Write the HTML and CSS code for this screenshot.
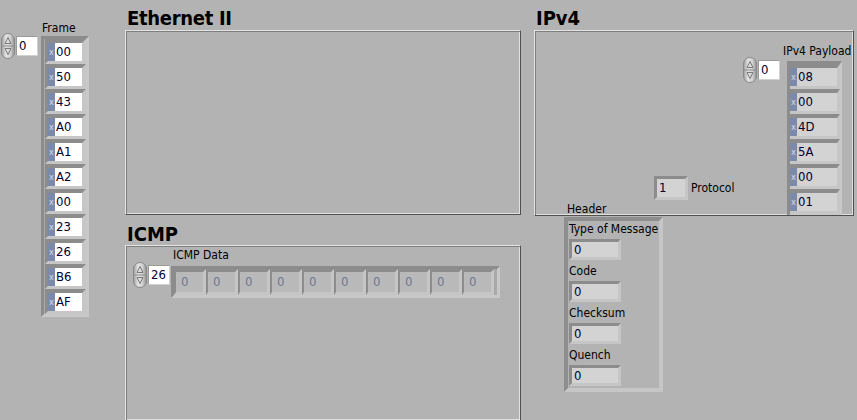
FILE: index.html
```html
<!DOCTYPE html>
<html>
<head>
<meta charset="utf-8">
<title>Front Panel</title>
<link rel="stylesheet" href="styles.css">
</head>
<body>
<svg class="defs" width="0" height="0" aria-hidden="true">
  <defs>
    <linearGradient id="spg" x1="0" y1="0" x2="1" y2="0">
      <stop offset="0" stop-color="#9c9c9c"/>
      <stop offset="0.35" stop-color="#e4e4e4"/>
      <stop offset="0.7" stop-color="#d0d0d0"/>
      <stop offset="1" stop-color="#8e8e8e"/>
    </linearGradient>
  </defs>
</svg>
<div class="panel">
  <div class="col col-frame">
    <div class="ctl ctl-frame">
      <div class="idx">
        <svg class="spin" width="14" height="26" viewBox="0 0 14 26"><rect x="0.5" y="0.5" width="13" height="25" rx="6.5" fill="url(#spg)" stroke="#888"/><line x1="1.5" y1="13" x2="12.5" y2="13" stroke="#8a8a8a"/><path d="M7 4.5 L10 10.5 L4 10.5 Z" fill="none" stroke="#7a7a7a"/><path d="M7 21.5 L10 15.5 L4 15.5 Z" fill="none" stroke="#7a7a7a"/></svg>
        <div class="idxbox">0</div>
      </div>
      <div class="arr">
        <div class="lbl lbl-frame">Frame</div>
        <div class="aframe vframe">
          <div class="el ve"><span class="rdx">x</span><span class="v">00</span></div>
          <div class="el ve"><span class="rdx">x</span><span class="v">50</span></div>
          <div class="el ve"><span class="rdx">x</span><span class="v">43</span></div>
          <div class="el ve"><span class="rdx">x</span><span class="v">A0</span></div>
          <div class="el ve"><span class="rdx">x</span><span class="v">A1</span></div>
          <div class="el ve"><span class="rdx">x</span><span class="v">A2</span></div>
          <div class="el ve"><span class="rdx">x</span><span class="v">00</span></div>
          <div class="el ve"><span class="rdx">x</span><span class="v">23</span></div>
          <div class="el ve"><span class="rdx">x</span><span class="v">26</span></div>
          <div class="el ve"><span class="rdx">x</span><span class="v">B6</span></div>
          <div class="el ve"><span class="rdx">x</span><span class="v">AF</span></div>
        </div>
      </div>
    </div>
  </div>

  <div class="col col-mid">
    <div class="heading h-top">Ethernet II</div>
    <div class="cluster eth"></div>
    <div class="heading h-icmp">ICMP</div>
    <div class="cluster icmp">
      <div class="ctl ctl-icmp">
        <div class="idx">
          <svg class="spin" width="14" height="26" viewBox="0 0 14 26"><rect x="0.5" y="0.5" width="13" height="25" rx="6.5" fill="url(#spg)" stroke="#888"/><line x1="1.5" y1="13" x2="12.5" y2="13" stroke="#8a8a8a"/><path d="M7 4.5 L10 10.5 L4 10.5 Z" fill="none" stroke="#7a7a7a"/><path d="M7 21.5 L10 15.5 L4 15.5 Z" fill="none" stroke="#7a7a7a"/></svg>
          <div class="idxbox">26</div>
        </div>
        <div class="arr">
          <div class="lbl lbl-icmp">ICMP Data</div>
          <div class="aframe hframe">
            <div class="el he"><span class="v">0</span></div>
            <div class="el he"><span class="v">0</span></div>
            <div class="el he"><span class="v">0</span></div>
            <div class="el he"><span class="v">0</span></div>
            <div class="el he"><span class="v">0</span></div>
            <div class="el he"><span class="v">0</span></div>
            <div class="el he"><span class="v">0</span></div>
            <div class="el he"><span class="v">0</span></div>
            <div class="el he"><span class="v">0</span></div>
            <div class="el he"><span class="v">0</span></div>
          </div>
        </div>
      </div>
    </div>
  </div>

  <div class="col col-right">
    <div class="heading h-top">IPv4</div>
    <div class="cluster ipv4">
      <div class="proto">
        <div class="ind ind-proto">1</div>
        <div class="lbl lbl-proto">Protocol</div>
      </div>
      <div class="ctl ctl-payload">
        <div class="idx">
          <svg class="spin" width="14" height="26" viewBox="0 0 14 26"><rect x="0.5" y="0.5" width="13" height="25" rx="6.5" fill="url(#spg)" stroke="#888"/><line x1="1.5" y1="13" x2="12.5" y2="13" stroke="#8a8a8a"/><path d="M7 4.5 L10 10.5 L4 10.5 Z" fill="none" stroke="#7a7a7a"/><path d="M7 21.5 L10 15.5 L4 15.5 Z" fill="none" stroke="#7a7a7a"/></svg>
          <div class="idxbox">0</div>
        </div>
        <div class="arr">
          <div class="lbl lbl-payload">IPv4 Payload</div>
          <div class="aframe pframe">
            <div class="el pe"><span class="rdx">x</span><span class="v">08</span></div>
            <div class="el pe"><span class="rdx">x</span><span class="v">00</span></div>
            <div class="el pe"><span class="rdx">x</span><span class="v">4D</span></div>
            <div class="el pe"><span class="rdx">x</span><span class="v">5A</span></div>
            <div class="el pe"><span class="rdx">x</span><span class="v">00</span></div>
            <div class="el pe"><span class="rdx">x</span><span class="v">01</span></div>
          </div>
        </div>
      </div>
    </div>
    <div class="hdr">
      <div class="lbl lbl-hdr">Header</div>
      <div class="hbox">
        <div class="fld"><div class="lbl">Type of Message</div><div class="ind ind-h">0</div></div>
        <div class="fld"><div class="lbl">Code</div><div class="ind ind-h">0</div></div>
        <div class="fld"><div class="lbl">Checksum</div><div class="ind ind-h">0</div></div>
        <div class="fld"><div class="lbl">Quench</div><div class="ind ind-h">0</div></div>
      </div>
    </div>
  </div>
</div>
</body>
</html>
```

FILE: styles.css
```css
* { box-sizing: border-box; }
html, body { margin: 0; padding: 0; }
body {
  background: #b3b3b3;
  font-family: "DejaVu Sans Condensed", "DejaVu Sans", sans-serif;
  font-stretch: condensed;
  font-size: 12px;
  color: #000;
}
.defs { position: absolute; width: 0; height: 0; }
.panel {
  display: flex;
  width: 857px;
  height: 420px;
  overflow: hidden;
}
.col-frame { width: 125px; padding: 21px 0 0 1px; }
.col-mid { width: 396px; }
.col-right { width: 320px; margin-left: 13px; }

.heading {
  font-weight: bold;
  font-size: 20px;
  line-height: 24px;
  padding-left: 2px;
  color: #000;
}
.h-top { margin-top: 6px; height: 24px; }
.col-mid .h-top { letter-spacing: -0.3px; }
.h-icmp { height: 30px; padding-top: 8px; line-height: 23px; }

.cluster {
  border: 1px solid;
  border-color: #e4e4e4 #505050 #505050 #e4e4e4;
  box-shadow: inset 1px 1px 0 #7e7e7e, inset -1px -1px 0 #e0e0e0;
}
.eth { height: 185px; }
.icmp { height: 176px; padding: 2px 0 0 7px; }
.ipv4 {
  height: 186px;
  overflow: hidden;
  display: flex;
  justify-content: flex-end;
  align-items: flex-start;
  padding: 13px 11px 15px 0;
}

.ctl { display: flex; align-items: flex-start; }
.arr { display: flex; flex-direction: column; align-items: flex-start; }
.idx { display: flex; align-items: center; gap: 1px; }
.spin { display: block; }
.idxbox {
  width: 22px;
  height: 20px;
  background: #fff;
  border: 1px solid;
  border-color: #9a9a9a #d0d0d0 #d0d0d0 #9a9a9a;
  padding-left: 2px;
  line-height: 18px;
  font-size: 13px;
  color: #000030;
}
.ctl-frame .idx { margin-top: 12px; }
.ctl-frame .arr { margin-left: 3px; }
.ctl-icmp .idx { margin-top: 14px; }
.ctl-icmp .arr { margin-left: 1px; }
.ctl-payload .idx { margin-top: 13px; }
.ctl-payload .arr { margin-left: 7px; }

.lbl { line-height: 15px; white-space: nowrap; }
.lbl-frame { padding-left: 1px; }
.lbl-icmp { padding-left: 2px; margin-bottom: 3px; }
.lbl-payload { width: 0; overflow: visible; margin-left: -4px; margin-bottom: 2px; }

.aframe {
  border: 3px solid;
  border-color: #8c8c8c #c8c8c8 #c8c8c8 #8c8c8c;
  background: #a9a9a9;
}
.vframe { padding-left: 1px; }
.pframe { border-right-width: 2px; }
.hframe { display: flex; padding-right: 3px; }

.el {
  display: flex;
  border-style: solid;
  border-color: #8c8c8c #c6c6c6 #c6c6c6 #8c8c8c;
}
.ve, .pe {
  height: 25px;
  border-width: 4px 4px 3px 3px;
}
.pe { border-left-width: 0; border-right-width: 3px; }
.rdx {
  width: 7px;
  background: #7b8aab;
  color: #d4dbe8;
  font-size: 9px;
  line-height: 18px;
  text-align: center;
}
.v {
  line-height: 18px;
  padding-left: 1px;
  font-size: 13px;
  color: #000030;
}
.ve .v { width: 27px; background: #fff; }
.pe .v { width: 40px; background: #d3d3d3; }
.he {
  width: 32px;
  height: 26px;
  border-width: 3px 3px 3px 2px;
}
.he .v {
  width: 27px;
  background: #b9b9b9;
  color: #6c7895;
  padding-left: 5px;
  line-height: 20px;
}

.ind {
  border: 3px solid;
  border-color: #8c8c8c #c6c6c6 #c6c6c6 #8c8c8c;
  background: #d3d3d3;
  color: #000030;
  padding-left: 2px;
  line-height: 15px;
  font-size: 13px;
}
.proto {
  display: flex;
  align-items: center;
  align-self: flex-end;
  margin-right: 7px;
}
.ind-proto { width: 34px; height: 24px; line-height: 18px; }
.lbl-proto { margin-left: 3px; width: 45px; }

.hdr { margin: -14px 0 0 30px; }
.lbl-hdr { padding-left: 3px; }
.hbox {
  width: 99px;
  height: 175px;
  border: 4px solid;
  border-color: #8e8e8e #c6c6c6 #c6c6c6 #8e8e8e;
  padding-left: 1px;
}
.fld .lbl { line-height: 16px; }
.ind-h { width: 52px; height: 21px; margin: 2px 0 3px; }
```
